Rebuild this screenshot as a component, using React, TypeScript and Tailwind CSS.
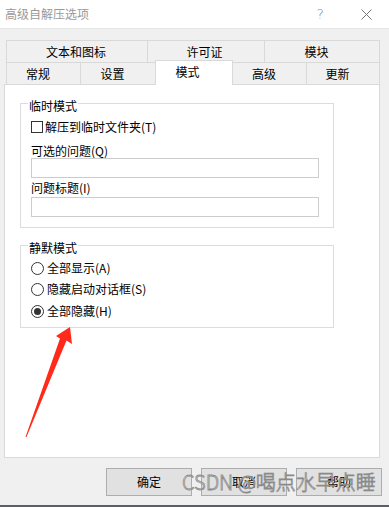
import React from 'react';

const TAB_ROW_1 = [
  { label: '文本和图标', cls: 'w-[142px] border-l pr-[2px]' },
  { label: '许可证', cls: 'w-[117px] pr-[3px]' },
  { label: '模块', cls: 'w-[115px] pr-[11px]' },
];

const Radio = ({ checked, label, mnemonic }: { checked?: boolean; label: string; mnemonic: string }) => (
  <div className="flex items-center h-[16px]">
    <div className="w-[13px] h-[13px] rounded-full border border-[#333] bg-white flex items-center justify-center">
      {checked && <div className="w-[7px] h-[7px] rounded-full bg-[#333]" />}
    </div>
    <span className="ml-[3px]">
      {label}({mnemonic})
    </span>
  </div>
);

export default function App() {
  return (
    <div className="relative w-[389px] h-[507px] overflow-hidden bg-[#f0f0f0] flex flex-col text-[12px] leading-[16px] text-black font-['Noto_Sans_CJK_SC','Noto_Sans',sans-serif]">
      {/* title bar */}
      <div className="h-[29px] bg-white flex items-center pl-[5px] border-b border-[#e6e6e6]">
        <span className="text-[#999]">高级自解压选项</span>
        <span className="ml-auto mr-[37px] text-[14px] text-[#888] font-['DejaVu_Sans',sans-serif] font-light">?</span>
        <svg width="11" height="11" viewBox="0 0 11 11" className="mr-[17px]">
          <path d="M0.5 0.5 L10.5 10.5 M10.5 0.5 L0.5 10.5" stroke="#777" strokeWidth="1" fill="none" />
        </svg>
      </div>

      <div className="pl-[4px] pt-[11px]">
        {/* tabs */}
        <div className="ml-[2px] flex flex-col">
          <div className="flex h-[22px]">
            {TAB_ROW_1.map((t) => (
              <div key={t.label} className={`h-[22px] border-t border-r border-[#d9d9d9] flex items-center justify-center ${t.cls}`}>
                {t.label}
              </div>
            ))}
          </div>
          <div className="flex h-[22px]">
            <div className="w-[75px] h-[22px] border-t border-l border-r border-[#d9d9d9] flex items-center justify-center pr-[11px]">常规</div>
            <div className="w-[75px] h-[22px] border-t border-r border-[#d9d9d9] flex items-center justify-center pr-[11px]">设置</div>
            <div className="relative z-10 -ml-[1px] -mt-[2px] w-[78px] h-[25px] bg-white border-t border-l border-r border-[#d9d9d9] flex items-center justify-center pr-[13px] pb-[2px]">模式</div>
            <div className="w-[74px] h-[22px] border-t border-r border-[#d9d9d9] flex items-center justify-center pr-[11px]">高级</div>
            <div className="w-[73px] h-[22px] border-t border-r border-[#d9d9d9] flex items-center justify-center pr-[11px]">更新</div>
          </div>
        </div>

        {/* panel */}
        <div className="w-[376px] h-[374px] bg-white border border-[#d9d9d9] pl-[15px] pt-[18px]">
          <div className="relative w-[314px] h-[125px] border border-[#dcdcdc] pl-[10px] flex flex-col">
            <span className="absolute left-[7px] top-[-6px] bg-white px-[1px]">临时模式</span>
            <div className="mt-[15px] flex items-center h-[16px]">
              <div className="w-[12px] h-[12px] border border-[#333] bg-white" />
              <span className="ml-[2px]">解压到临时文件夹(T)</span>
            </div>
            <div className="mt-[8px] h-[16px]">可选的问题(Q)</div>
            <div className="-mt-[1px] w-[288px] h-[20px] border border-[#cccccc] bg-white" />
            <div className="mt-[2px] h-[16px]">问题标题(I)</div>
            <div className="mt-[1px] w-[288px] h-[20px] border border-[#cccccc] bg-white" />
          </div>

          <div className="relative mt-[17px] w-[314px] h-[83px] border border-[#dcdcdc] pl-[10px] flex flex-col">
            <span className="absolute left-[7px] top-[-6px] bg-white px-[1px]">静默模式</span>
            <div className="mt-[14px]">
              <Radio label="全部显示" mnemonic="A" />
            </div>
            <div className="mt-[5px]">
              <Radio label="隐藏启动对话框" mnemonic="S" />
            </div>
            <div className="mt-[6px]">
              <Radio checked label="全部隐藏" mnemonic="H" />
            </div>
          </div>
        </div>
      </div>

      {/* buttons */}
      <div className="mt-[10px] flex justify-end gap-[9px] pr-[7px]">
        {['确定', '取消', '帮助'].map((b) => (
          <button key={b} className="w-[86px] h-[28px] bg-[#e1e1e1] border border-[#adadad] flex items-center justify-center">
            {b}
          </button>
        ))}
      </div>

      <div className="mt-auto h-[2px] bg-[#5d5d68]" />

      {/* red arrow annotation */}
      <svg className="absolute left-0 top-0 pointer-events-none" width="389" height="507" viewBox="0 0 389 507">
        <polygon points="70,327 72,344 66.5,340.5 26.5,437 25.5,437 60,338.5 56,336" fill="#ff2a1a" />
      </svg>

      {/* watermark */}
      <div className="absolute left-[182px] top-[470px] text-[20px] leading-[24px] text-white/60 font-light [-webkit-text-stroke:0.8px_#8a8a8a] pointer-events-none font-['Noto_Sans_CJK_SC',sans-serif]">
        CSDN @喝点水早点睡
      </div>
    </div>
  );
}
